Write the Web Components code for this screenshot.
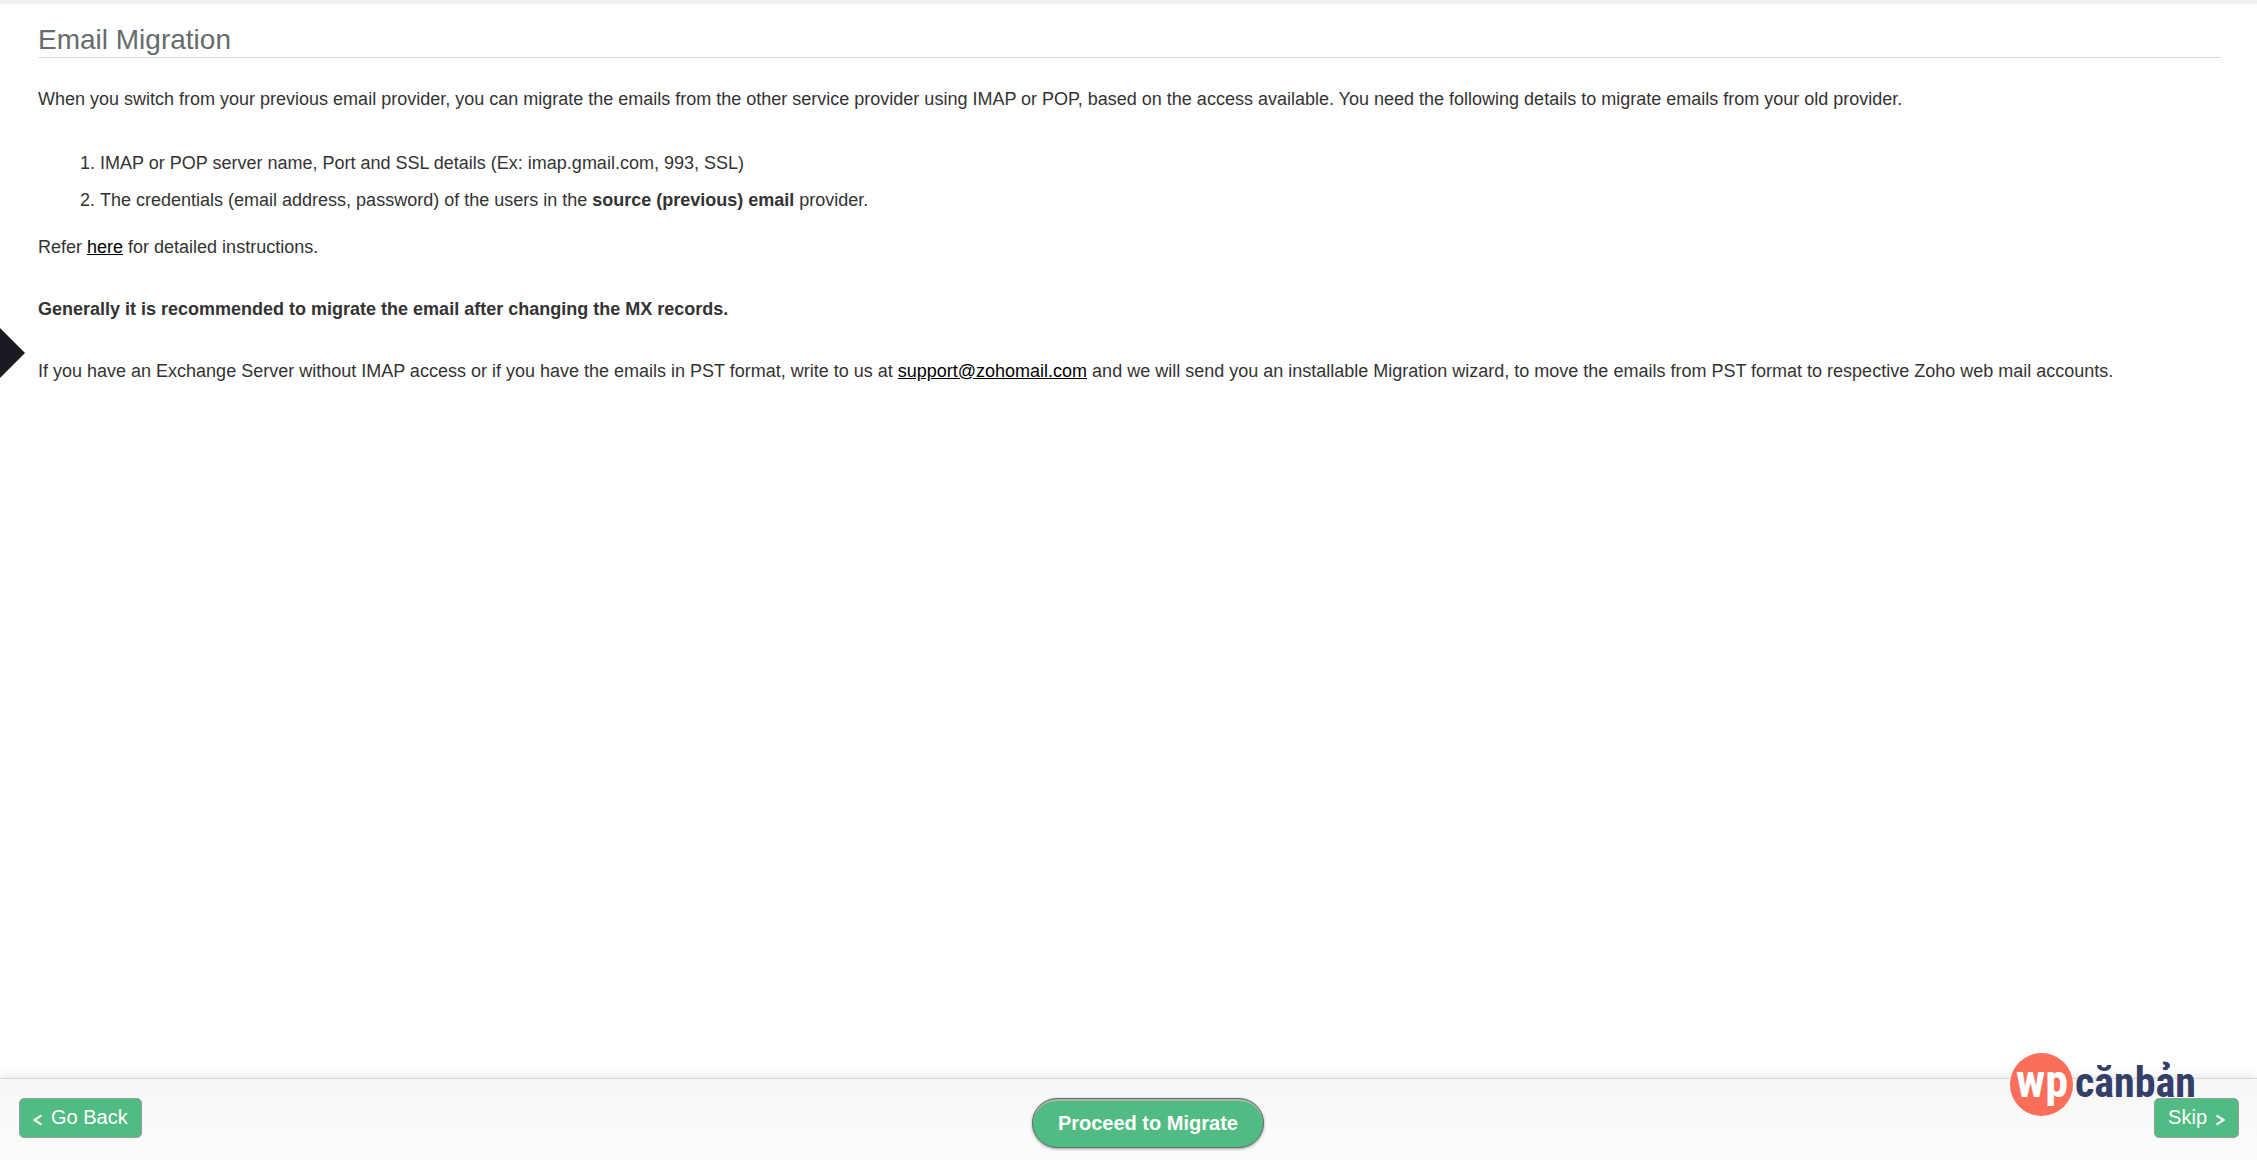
<!DOCTYPE html>
<html lang="en">
<head>
<meta charset="UTF-8">
<title>Email Migration</title>
<style>
body{
    margin: 0;
    background-color: #fff;
    color: #333;
    font-family: "Liberation Sans", Arial, sans-serif;
    font-size: 18px;
    line-height: 22px;
}
</style>
</head>
<body>
<migration-page>
    <migration-guide slot="content"></migration-guide>
    <side-arrow slot="overlay"></side-arrow>
    <wizard-footer slot="footer">
        <nav-button direction="back">Go Back</nav-button>
        <proceed-button>Proceed to Migrate</proceed-button>
        <nav-button direction="next">Skip</nav-button>
    </wizard-footer>
    <brand-logo slot="overlay"></brand-logo>
</migration-page>

<script>
const page = document.createElement("template");
page.innerHTML = `
<style>
:host{
    display: flex;
    flex-direction: column;
    position: relative;
    min-height: 100vh;
}

.top{
    height: 3px;
    background-color: #efefef;
    border-bottom: 2px solid #f9f9f9;
}

main{
    flex: 1;
}
</style>
<div class="top"></div>
<main><slot name="content"></slot></main>
<slot name="overlay"></slot>
<slot name="footer"></slot>
`;

const guide = document.createElement("template");
guide.innerHTML = `
<style>
:host{
    display: block;
    padding: 18px 36px 40px 38px;
}

h1{
    margin: 0 0 30px;
    border-bottom: 1px solid #d9dbdb;
    color: #666b6b;
    font-size: 28px;
    font-weight: normal;
    line-height: 34px;
}

p{
    margin: 0 0 40px;
}

ol{
    margin: 0 0 17px;
    padding-left: 62px;
}

li{
    line-height: 37px;
}

.intro{
    margin-bottom: 35px;
}

a{
    color: #000;
}
</style>
<h1>Email Migration</h1>
<p class="intro">When you switch from your previous email provider, you can migrate the emails from the other service provider using IMAP or POP, based on the access available. You need the following details to migrate emails from your old provider.</p>
<ol>
    <li>IMAP or POP server name, Port and SSL details (Ex: imap.gmail.com, 993, SSL)</li>
    <li>The credentials (email address, password) of the users in the <b>source (previous) email</b> provider.</li>
</ol>
<p>Refer <a href="#help">here</a> for detailed instructions.</p>
<p><b>Generally it is recommended to migrate the email after changing the MX records.</b></p>
<p>If you have an Exchange Server without IMAP access or if you have the emails in PST format, write to us at <a href="mailto:support@zohomail.com">support@zohomail.com</a> and we will send you an installable Migration wizard, to move the emails from PST format to respective Zoho web mail accounts.</p>
`;

const arrow = document.createElement("template");
arrow.innerHTML = `
<style>
:host{
    display: block;
    position: absolute;
    top: 328px;
    left: 0;
}

svg{
    display: block;
}
</style>
<svg width="25" height="50" viewBox="0 0 25 50" aria-hidden="true"><path d="M0 0L25 25L0 50Z" fill="#1a1b22"/></svg>
`;

const footer = document.createElement("template");
footer.innerHTML = `
<style>
:host{
    display: block;
}

footer{
    display: flex;
    justify-content: space-between;
    align-items: flex-start;
    padding: 19px 18px 12px 19px;
    border-top: 1px solid #d9d9d9;
    background: linear-gradient(#f7f7f7, #fcfcfc);
    box-shadow: 0 0 10px rgba(0, 0, 0, .14);
}
</style>
<footer><slot></slot></footer>
`;

const navButton = document.createElement("template");
navButton.innerHTML = `
<style>
:host{
    display: block;
    position: relative;
    z-index: 2;
}

button{
    display: flex;
    align-items: center;
    gap: 9px;
    height: 40px;
    padding: 0 13px 2px;
    border: 1px solid #9a9f96;
    border-radius: 5px;
    background-color: #50bb82;
    color: #fff;
    font: 20px "Liberation Sans", Arial, sans-serif;
    cursor: pointer;
}

svg{
    width: 9px;
    height: 12px;
    margin-top: 5px;
    fill: none;
    stroke: #e9f2ec;
    stroke-width: 2.3;
}

:host([direction="next"]) button{
    flex-direction: row-reverse;
}

:host([direction="next"]) path{
    transform: scaleX(-1);
    transform-origin: center;
}
</style>
<button type="button">
    <svg viewBox="0 0 9 12" aria-hidden="true"><path d="M8.5 1.5L1.5 6L8.5 10.5"/></svg>
    <span><slot></slot></span>
</button>
`;

const proceed = document.createElement("template");
proceed.innerHTML = `
<style>
:host{
    display: block;
}

button{
    display: block;
    height: 50px;
    padding: 0 25px;
    border: 1px solid #5f6f69;
    border-radius: 25px;
    background-color: #50bb82;
    box-shadow: inset 0 2px 0 #a9b5a8, 0 1px 3px rgba(0, 0, 0, .4);
    color: #fff;
    font: bold 20px "Liberation Sans", Arial, sans-serif;
    cursor: pointer;
}
</style>
<button type="button"><slot></slot></button>
`;

const logo = document.createElement("template");
logo.innerHTML = `
<style>
:host{
    display: block;
    position: absolute;
    right: 62px;
    bottom: 44px;
    z-index: 1;
}

svg{
    display: block;
    overflow: visible;
}

text{
    font-family: "Roboto Condensed", Roboto, sans-serif;
    font-weight: bold;
}
</style>
<svg width="185" height="63" viewBox="0 0 185 63">
    <circle cx="31.5" cy="31.5" r="31.5" fill="#fa6e5a"/>
    <text x="6" y="44" font-size="46" fill="#fff">wp</text>
    <text x="65" y="44" font-size="42" fill="#333e69">cănbản</text>
</svg>
`;

function define(name, template){
    customElements.define(name, class extends HTMLElement{
        constructor(){
            super();

            this.attachShadow({mode:'open'});

            this.shadowRoot.append(template.content.cloneNode(true));
        }
    });
}

define('migration-page', page);
define('migration-guide', guide);
define('side-arrow', arrow);
define('wizard-footer', footer);
define('nav-button', navButton);
define('proceed-button', proceed);
define('brand-logo', logo);
</script>
</body>
</html>
